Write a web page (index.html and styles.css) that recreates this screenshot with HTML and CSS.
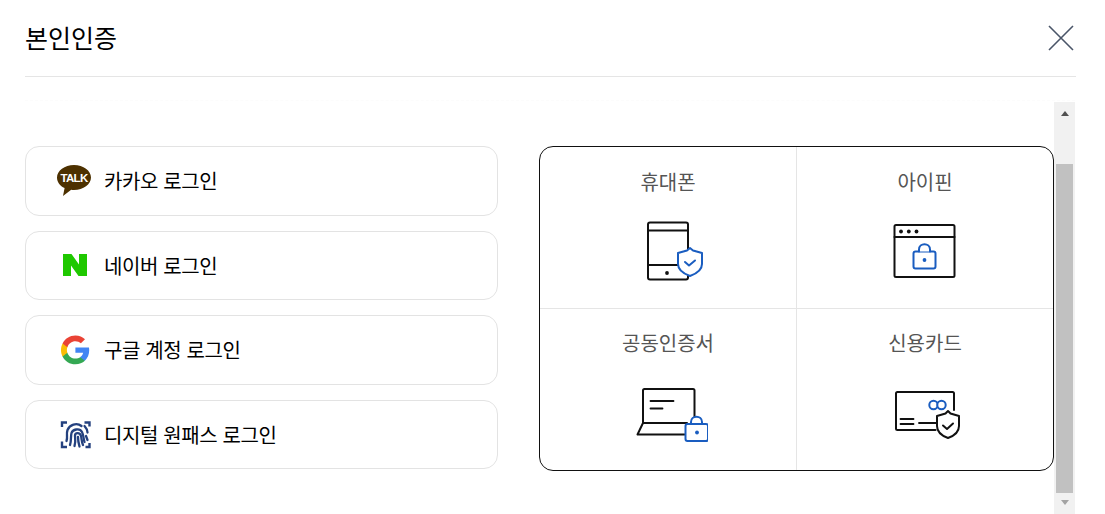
FILE: index.html
```html
<!DOCTYPE html>
<html lang="ko">
<head>
<meta charset="utf-8">
<title>본인인증</title>
<link rel="stylesheet" href="styles.css">
</head>
<body>
<div class="modal">
  <header class="head">
    <h1 class="title">본인인증</h1>
    <button class="close" aria-label="닫기">
      <svg width="28" height="28" viewBox="0 0 28 28"><path d="M2 2L26 26M26 2L2 26" fill="none" stroke="#4a5568" stroke-width="1.6"/></svg>
    </button>
  </header>
  <div class="fade"></div>
  <div class="body">
    <div class="content">
      <div class="logins">
        <a class="login">
          <svg class="logo" width="36" height="34" viewBox="0 0 36 34"><path d="M18 1C8.600 1 1 6.600 1 13.500c0 4.500 3 8.400 7.600 10.600L7 32l8.200-6.200c.9.100 1.900.2 2.800.2 9.400 0 17-5.600 17-12.500S27.400 1 18 1z" fill="#4d3100"/><text x="18" y="18" class="talk">TALK</text></svg>
          <span>카카오 로그인</span>
        </a>
        <a class="login">
          <svg class="logo" width="36" height="34" viewBox="0 0 36 34"><path d="M7 6h8.500l7.500 10.500V6h8v22h-8.500L15 17.500V28H7z" fill="#1fc800"/></svg>
          <span>네이버 로그인</span>
        </a>
        <a class="login">
          <svg class="logo" width="36" height="34" viewBox="0 0 36 34"><g transform="translate(5 2.500) scale(.6)">
            <path fill="#4285f4" d="M47 24.500c0-1.600-.1-3.200-.4-4.700H24v8.900h12.900c-.6 3-2.300 5.500-4.800 7.200v6h7.700C44.300 37.700 47 31.700 47 24.500z"/>
            <path fill="#34a853" d="M24 48c6.500 0 11.900-2.100 15.800-5.800l-7.700-6c-2.100 1.400-4.900 2.300-8.100 2.300-6.200 0-11.500-4.200-13.400-9.900H2.600v6.200C6.500 42.600 14.600 48 24 48z"/>
            <path fill="#fbbc05" d="M10.600 28.600c-.5-1.400-.8-3-.8-4.600s.3-3.200.8-4.600v-6.200h-8C1 16.400 0 20.100 0 24s1 7.600 2.600 10.800z"/>
            <path fill="#ea4335" d="M24 9.500c3.500 0 6.700 1.200 9.200 3.600l6.800-6.800C35.900 2.400 30.500 0 24 0 14.600 0 6.500 5.400 2.600 13.200l8 6.200C12.500 13.700 17.800 9.500 24 9.500z"/>
          </g></svg>
          <span>구글 계정 로그인</span>
        </a>
        <a class="login">
          <svg class="logo" width="36" height="34" viewBox="0 0 36 34" fill="none" stroke="#24417f"><g stroke-width="2.400"><path d="M6 10V5.500h5M28.500 5.500h5v4M6 24.500v5.500h5M33.500 26v4h-4"/></g><g stroke-width="2.300" stroke-linecap="round"><path d="M10.500 24c1.500-4-.5-7 1-11 2-5 9-8 14-4"/><path d="M14 28c1.500-4 .5-8 1.500-12 1-3.500 8-5.500 10.500-1 1.500 3 1.500 7 2.500 10"/><path d="M18.500 29c1.500-4 .5-8 .5-10.500 0-3 5-3.500 6 .5.800 3 .5 6 2 9"/><path d="M22 20c0 4 .5 6 1.500 9.500"/><path d="M28.500 9c1.800 2 3 4 3 6.500"/><path d="M30 19l1.500 4"/></g></svg>
          <span>디지털 원패스 로그인</span>
        </a>
      </div>
      <div class="methods">
        <div class="method method-a">
          <h2 class="method-title">휴대폰</h2>
          <svg class="icon" width="80" height="64" viewBox="628.500 218 80 64">
            <rect class="k" x="648.500" y="222.500" width="40" height="57" rx="2"/><path class="k" d="M648.500 230.500h40M648.500 265h40"/><circle cx="667.500" cy="273" r="1.900" fill="#111"/>
            <path class="s-w" d="M690.500 248l-3 2.500-9 2.500v11c0 5 5 9.500 12 12 7-2.500 12-7 12-12v-11l-9-2.500z"/>
            <path class="b" d="M685.500 262l4 3.500 6-5"/>
          </svg>
        </div>
        <div class="method method-b">
          <h2 class="method-title">아이핀</h2>
          <svg class="icon" width="80" height="64" viewBox="885.500 218 80 64">
            <rect class="k" x="895" y="225" width="60" height="52" rx="1.500"/><path class="k" d="M895 237h60"/>
            <circle cx="901.500" cy="231.500" r="1.900" fill="#111"/><circle cx="909.300" cy="231.500" r="1.900" fill="#111"/><circle cx="917" cy="231.500" r="1.900" fill="#111"/>
            <rect class="b" x="914" y="251.500" width="22" height="17" rx="2"/><path class="b" d="M919.500 251.500v-2c0-7 11-7 11 0v2"/><circle cx="925" cy="260" r="1.900" fill="#1a5dc0"/>
          </svg>
        </div>
        <div class="method method-c">
          <h2 class="method-title">공동인증서</h2>
          <svg class="icon" width="80" height="64" viewBox="628.500 380 80 64">
            <path class="k" d="M643.500 422v-32.500q0-1.500 1.500-1.500h48.500q1.500 0 1.500 1.500V422M643.500 422h44M643.500 422l-5.500 11.500h47"/>
            <path class="k2" d="M651 400h23M651 407.500h12"/>
            <path class="b" d="M691.500 423v-2c0-7 11-7 11 0v2"/><rect class="b" x="686" y="423" width="22.500" height="17" rx="2"/><circle cx="697.500" cy="431.500" r="1.900" fill="#1a5dc0"/>
          </svg>
        </div>
        <div class="method method-d">
          <h2 class="method-title">신용카드</h2>
          <svg class="icon" width="80" height="64" viewBox="885.500 380 80 64">
            <path class="k" d="M936 429h-38q-1.500 0-1.500-1.500v-35q0-1.500 1.500-1.500h55q1.500 0 1.500 1.500V409"/>
            <circle class="b" cx="934" cy="404" r="4.200"/><circle class="b" cx="942" cy="404" r="4.200"/>
            <path class="k2" d="M901 418h13M901 423h13M919.500 422h18"/>
            <path class="k-w" d="M948.500 410l-2.500 2.500-8.500 2.500v10c0 5 4 9.500 11 12 7-2.500 11-7 11-12v-10l-8.500-2.500z"/>
            <path class="k" d="M943.500 424.500l4 3.500 6-5.500"/>
          </svg>
        </div>
      </div>
    </div>
    <div class="scrollbar">
      <div class="arrow-up"></div>
      <div class="thumb"></div>
      <div class="arrow-down"></div>
    </div>
  </div>
</div>
</body>
</html>
```

FILE: styles.css
```css
* { box-sizing: border-box; }
html, body { margin: 0; padding: 0; height: 100%; overflow: hidden; background: #fff; }
body { font-family: "Noto Sans CJK KR", "Noto Sans", sans-serif; color: #000; }
.modal { width: 1105px; height: 514px; display: flex; flex-direction: column; padding: 0 29px 0 25px; }
.head { height: 77px; flex: none; display: flex; align-items: center; justify-content: space-between; border-bottom: 1px solid #e5e5e5; padding: 0 1px 0 0; }
.title { margin: 0 0 2px; font-size: 25px; font-weight: 400; line-height: 1.2; color: #000; }
.close { padding: 0; border: 0; background: none; display: flex; margin: 0; }
.fade { height: 1px; flex: none; margin: 23px 1px 1px 0; border-top: 1px dashed #fcfcfc; }
.body { flex: 1; display: flex; min-height: 0; margin-right: 1px; }
.content { flex: 1; display: flex; gap: 41px; padding-top: 44px; align-items: flex-start; }
.logins { width: 473px; display: flex; flex-direction: column; gap: 15px; }
.login { height: 69.500px; display: flex; align-items: center; gap: 12px; padding-left: 30px; border: 1px solid #e3e3e3; border-radius: 14px; font-size: 20px; font-weight: 400; color: #000; letter-spacing: -.4px; }
.logo { flex: none; }
.talk { font-family: "Liberation Sans", sans-serif; font-size: 11.500px; font-weight: 700; fill: #fff; text-anchor: middle; letter-spacing: -.7px; }
.methods { width: 515px; height: 325px; display: grid; grid-template-columns: 257px 1fr; grid-template-rows: 162px 1fr; border: 1px solid #111; border-radius: 14px; overflow: hidden; }
.method { display: flex; flex-direction: column; align-items: center; padding-top: 17px; }
.method-a, .method-c { border-right: 1px solid #e5e5e5; }
.method-a, .method-b { border-bottom: 1px solid #e5e5e5; }
.method-title { margin: 0 0 18px; font-size: 20px; font-weight: 400; line-height: 36px; height: 36px; color: #555; }
.method-c, .method-d { padding-top: 16px; }
.method-c .method-title, .method-d .method-title { margin-bottom: 20px; }
.icon { flex: none; }
.k, .k-w, .k2, .b, .s-w { stroke-linejoin: round; stroke-linecap: round; }
.k { fill: none; stroke: #111; stroke-width: 2; }
.k2 { fill: none; stroke: #111; stroke-width: 1.800; }
.b { fill: #fff; stroke: #1a5dc0; stroke-width: 2; }
.s-w { fill: #fff; stroke: #1a5dc0; stroke-width: 2; }
.k-w { fill: #fff; stroke: #111; stroke-width: 2; }
.scrollbar { width: 21px; flex: none; background: #f1f1f1; display: flex; flex-direction: column; align-items: center; }
.arrow-up, .arrow-down { flex: none; width: 0; border-left: 4px solid transparent; border-right: 4px solid transparent; }
.arrow-up { border-bottom: 5px solid #505050; height: 5px; margin: 9px 0 48px; }
.arrow-down { border-top: 5px solid #a3a3a3; height: 5px; margin: 7px 0 9px; }
.thumb { width: 17px; flex: 1; background: #c1c1c1; }
```
